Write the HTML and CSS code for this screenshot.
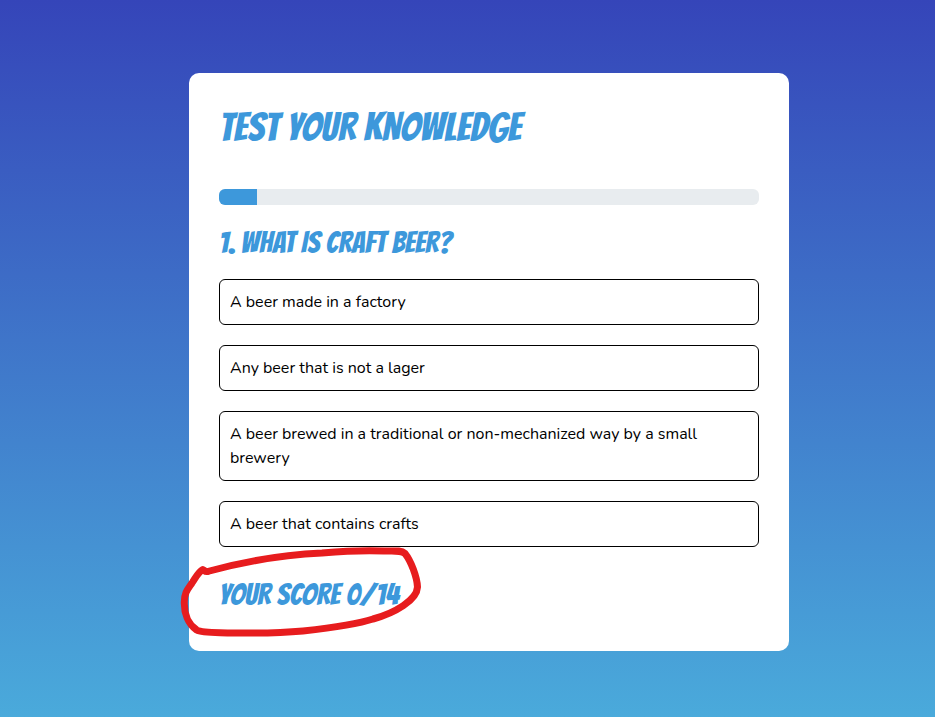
FILE: index.html
```
<!DOCTYPE html>
<html lang="en">
<head>
<meta charset="utf-8">
<title>Test your knowledge</title>
<link rel="stylesheet" href="styles.css">
</head>
<body>
<main class="card">
  <h1 class="title">TEST YOUR KNOWLEDGE</h1>
  <div class="progress"><div class="progress-bar" style="width: 7.1%"></div></div>
  <h2 class="question">1. WHAT IS CRAFT BEER?</h2>
  <div class="answers">
    <div class="answer">A beer made in a factory</div>
    <div class="answer">Any beer that is not a lager</div>
    <div class="answer">A beer brewed in a traditional or non-mechanized way by a small brewery</div>
    <div class="answer">A beer that contains crafts</div>
  </div>
  <h2 class="score">YOUR SCORE 0/14</h2>
  <svg class="marker" width="250" height="100" viewBox="175 542 250 100" aria-hidden="true">
    <path d="M207.5 571.5 C205 572 204 570 202.7 569.6 C198 572 195 579 192 583 C188 589 184.5 592 184.3 602 C184 613 188 624 196.7 630 C202 633 214 632.3 233 633 C268 633.5 292 632 303 631 C330 628 355 625 373 619 C395 613 417 600 417.5 587 C417 577 411 561 405 553.5 C401 550 394 551 384 551 C364 550 345 551 322 553 C279 555 242 562 207.5 571.5"/>
  </svg>
</main>
</body>
</html>
```

FILE: styles.css
```
* { box-sizing: border-box; }
body {
  margin: 0;
  min-height: 717px;
  padding: 73px 0 0 189px;
  background: linear-gradient(#3545b9, #4aaadb) no-repeat;
  font: 16px/24px Nunito, Lato, "Liberation Sans", sans-serif;
  color: #000;
}
.card {
  position: relative;
  width: 600px;
  height: 578px;
  padding: 30px;
  border-radius: 10px;
  background: #fff;
}
h1, h2 {
  margin: 0;
  color: #3d98db;
  font-family: Bangers, Roboto, "Liberation Sans", sans-serif;
  font-weight: 500;
  letter-spacing: 0.04px;
  white-space: nowrap;
}
.title { height: 86px; font-size: 40px; line-height: 48px; }
.progress {
  height: 16px;
  border-radius: 6px;
  background: #e8ecef;
  overflow: hidden;
}
.progress-bar { height: 100%; background: #3d98db; }
.question, .score { font-size: 30px; line-height: 36px; }
.question { height: 74px; padding-top: 20px; }
.answers { display: flex; flex-direction: column; gap: 20px; }
.answer {
  padding: 10px;
  border: 1px solid #000;
  border-radius: 6px;
  font-weight: 400;
}
.score { padding-top: 30px; }
.marker { position: absolute; left: -14px; top: 469px; }
.marker path {
  fill: none;
  stroke: #e71c1e;
  stroke-width: 7;
  stroke-linecap: round;
  stroke-linejoin: round;
}
```
